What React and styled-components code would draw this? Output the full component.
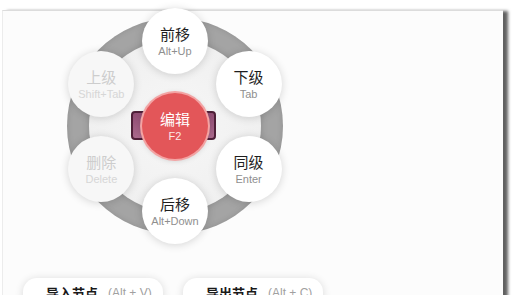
import React from "react";
import styled, { createGlobalStyle } from "styled-components";

const Global = createGlobalStyle`
  html, body { margin: 0; padding: 0; background: #ffffff; overflow: hidden; }
  body { font-family: "Liberation Sans", "Noto Sans CJK SC", Arial, sans-serif; }
`;

const Page = styled.div`
  width: 513px;
  height: 295px;
  overflow: hidden;
  background: #ffffff;
`;

const Panel = styled.div`
  margin: 10px 0 0 2px;
  width: 500px;
  height: 320px;
  background: #fcfcfc;
  border-top: 1px solid #dcdcdc;
  border-left: 1px solid #ececec;
  box-shadow: 5px 1px 3px rgba(0, 0, 0, 0.62);
  display: flex;
  flex-direction: column;
`;

const Menu = styled.div`
  position: relative;
  width: 216px;
  height: 236px;
  margin: -3px 0 0 64px;
`;

const Ring = styled.div`
  position: absolute;
  left: 0;
  top: 10px;
  width: 216px;
  height: 216px;
  border-radius: 50%;
  background: #a4a4a4;
  box-shadow: inset 0 0 6px rgba(0, 0, 0, 0.12);
  &::after {
    content: "";
    position: absolute;
    left: 22px;
    top: 22px;
    width: 172px;
    height: 172px;
    border-radius: 50%;
    background: radial-gradient(circle, #f7f7f7 0%, #f0f0f0 70%, #e6e6e6 100%);
    box-shadow: 0 0 7px rgba(0, 0, 0, 0.16);
  }
`;

const Bar = styled.div`
  position: absolute;
  left: 64px;
  top: 103px;
  width: 81px;
  height: 25px;
  border: 2px solid #4e2038;
  border-radius: 4px;
  background: linear-gradient(#8f4c72, #a9698c);
`;

const Node = styled.div`
  position: absolute;
  width: 66px;
  height: 66px;
  margin: -33px 0 0 -33px;
  border-radius: 50%;
  background: ${(p) => (p.$disabled ? "#f7f7f7" : "#ffffff")};
  box-shadow: 0 1px 8px rgba(0, 0, 0, 0.16);
  display: flex;
  flex-direction: column;
  align-items: center;
  justify-content: center;
`;

const Center = styled(Node)`
  background: #e35659;
  box-shadow: 0 0 0 2px #f3a3a3, 0 1px 6px rgba(0, 0, 0, 0.2);
`;

const Main = styled.div`
  font-family: "Noto Sans CJK SC", "Liberation Sans", sans-serif;
  font-size: 15px;
  line-height: 19px;
  color: ${(p) => (p.$light ? "#ffffff" : p.$disabled ? "#cdcdcd" : "#1e1e1e")};
`;

const Sub = styled.div`
  font-family: "Liberation Sans", Arial, sans-serif;
  font-size: 11px;
  line-height: 14px;
  margin-top: 1px;
  color: ${(p) => (p.$light ? "#fde6e6" : p.$disabled ? "#d6d6d6" : "#8f8f8f")};
`;

const Buttons = styled.div`
  display: flex;
  gap: 20px;
  padding-left: 20px;
  margin-top: 34px;
`;

const Button = styled.div`
  width: 140px;
  height: 36px;
  border-radius: 14px;
  background: #ffffff;
  box-shadow: 0 1px 8px rgba(0, 0, 0, 0.14);
  display: flex;
  align-items: flex-start;
  justify-content: flex-start;
  padding: 6px 0 0 23px;
  box-sizing: border-box;
  gap: 10px;
`;

const BtnLabel = styled.span`
  font-family: "Noto Sans CJK SC", sans-serif;
  font-size: 13px;
  font-weight: 700;
  line-height: 18px;
  color: #1a1a1a;
`;

const BtnKey = styled.span`
  font-family: "Liberation Sans", Arial, sans-serif;
  font-size: 12px;
  line-height: 18px;
  color: #a0a0a0;
`;

const cx = 108;
const cy = 118;
const R = 85;
const nodes = [
  { a: 0, main: "前移", sub: "Alt+Up" },
  { a: 60, main: "下级", sub: "Tab" },
  { a: 120, main: "同级", sub: "Enter" },
  { a: 180, main: "后移", sub: "Alt+Down" },
  { a: 240, main: "删除", sub: "Delete", disabled: true },
  { a: 300, main: "上级", sub: "Shift+Tab", disabled: true },
];

export default function App() {
  return (
    <Page>
      <Global />
      <Panel>
        <Menu>
          <Ring />
          {nodes.map((n) => {
            const rad = (n.a * Math.PI) / 180;
            const x = cx + R * Math.sin(rad);
            const y = cy - R * Math.cos(rad);
            return (
              <Node key={n.main} $disabled={n.disabled} style={{ left: x, top: y }}>
                <Main $disabled={n.disabled}>{n.main}</Main>
                <Sub $disabled={n.disabled}>{n.sub}</Sub>
              </Node>
            );
          })}
          <Bar />
          <Center style={{ left: cx, top: cy }}>
            <Main $light>编辑</Main>
            <Sub $light>F2</Sub>
          </Center>
        </Menu>
        <Buttons>
          <Button>
            <BtnLabel>导入节点</BtnLabel>
            <BtnKey>(Alt + V)</BtnKey>
          </Button>
          <Button>
            <BtnLabel>导出节点</BtnLabel>
            <BtnKey>(Alt + C)</BtnKey>
          </Button>
        </Buttons>
      </Panel>
    </Page>
  );
}
